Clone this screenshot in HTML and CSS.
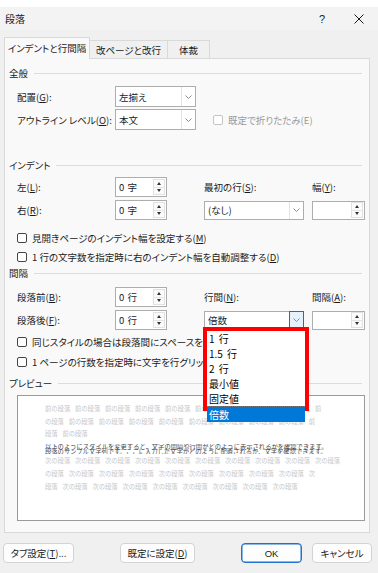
FILE: index.html
```html
<!DOCTYPE html>
<html lang="ja">
<head>
<meta charset="utf-8">
<title>段落</title>
<link rel="stylesheet" href="styles.css">
</head>
<body>
<div class="dialog">
  <div class="topstrip"></div>
  <div class="titlebar">
    <span class="title">段落</span>
    <span class="help">?</span>
    <span class="close"><svg width="10" height="10" viewBox="0 0 10 10"><path d="M0.5 0.5 L9.5 9.5 M9.5 0.5 L0.5 9.5" stroke="#1a1a1a" stroke-width="1"/></svg></span>
  </div>

  <div class="tabs">
    <div class="tab tab-1 active">インデントと行間隔</div>
    <div class="tab tab-2">改ページと改行</div>
    <div class="tab tab-3">体裁</div>
  </div>

  <div class="panel">
    <div class="section-head"><span>全般</span><span class="rule"></span></div>
    <div class="row g1">
      <span class="label">配置(<u>G</u>):</span>
      <div class="combo w81"><span class="val">左揃え</span><span class="arrow"><svg width="7" height="4" viewBox="0 0 7 4"><polyline points="0.5,0.5 3.5,3.5 6.5,0.5" fill="none" stroke="#808080" stroke-width="0.9"/></svg></span></div>
    </div>
    <div class="row g2">
      <span class="label">アウトライン レベル(<u>O</u>):</span>
      <div class="combo w81"><span class="val">本文</span><span class="arrow"><svg width="7" height="4" viewBox="0 0 7 4"><polyline points="0.5,0.5 3.5,3.5 6.5,0.5" fill="none" stroke="#808080" stroke-width="0.9"/></svg></span></div>
      <span class="check disabled inline-check"><span class="box"></span><span>既定で折りたたみ(E)</span></span>
    </div>

    <div class="section-head s-indent"><span>インデント</span><span class="rule"></span></div>
    <div class="row i1">
      <span class="label">左(<u>L</u>):</span>
      <div class="spin"><span class="val">0 字</span><span class="btns"><span class="up"></span><span class="down"></span></span></div>
      <span class="col2-label">最初の行(<u>S</u>):</span>
      <span class="col3-label">幅(<u>Y</u>):</span>
    </div>
    <div class="row i2">
      <span class="label">右(<u>R</u>):</span>
      <div class="spin"><span class="val">0 字</span><span class="btns"><span class="up"></span><span class="down"></span></span></div>
      <div class="combo w100 col2"><span class="val">(なし)</span><span class="arrow"><svg width="7" height="4" viewBox="0 0 7 4"><polyline points="0.5,0.5 3.5,3.5 6.5,0.5" fill="none" stroke="#808080" stroke-width="0.9"/></svg></span></div>
      <div class="spin w53 col3"><span class="val"></span><span class="btns"><span class="up"></span><span class="down"></span></span></div>
    </div>
    <div class="check-row c1"><span class="check"><span class="box"></span><span>見開きページのインデント幅を設定する(<u>M</u>)</span></span></div>
    <div class="check-row c2"><span class="check"><span class="box"></span><span>1 行の文字数を指定時に右のインデント幅を自動調整する(<u>D</u>)</span></span></div>

    <div class="section-head s-space"><span>間隔</span><span class="rule"></span></div>
    <div class="row p1">
      <span class="label">段落前(<u>B</u>):</span>
      <div class="spin"><span class="val">0 行</span><span class="btns"><span class="up"></span><span class="down"></span></span></div>
      <span class="col2-label">行間(<u>N</u>):</span>
      <span class="col3-label">間隔(<u>A</u>):</span>
    </div>
    <div class="row p2">
      <span class="label">段落後(<u>F</u>):</span>
      <div class="spin"><span class="val">0 行</span><span class="btns"><span class="up"></span><span class="down"></span></span></div>
      <div class="combo w100 col2 open"><span class="val">倍数</span><span class="arrow"><svg width="7" height="4" viewBox="0 0 7 4"><polyline points="0.5,0.5 3.5,3.5 6.5,0.5" fill="none" stroke="#808080" stroke-width="0.9"/></svg></span>
        <div class="dropdown">
          <div class="list">
            <div class="item">1 行</div>
            <div class="item">1.5 行</div>
            <div class="item">2 行</div>
            <div class="item">最小値</div>
            <div class="item">固定値</div>
            <div class="item selected">倍数</div>
          </div>
        </div>
      </div>
      <div class="spin w53 col3"><span class="val"></span><span class="btns"><span class="up"></span><span class="down"></span></span></div>
    </div>
    <div class="check-row c3"><span class="check"><span class="box"></span><span>同じスタイルの場合は段落間にスペースを追加しない(<u>C</u>)</span></span></div>
    <div class="check-row c4"><span class="check"><span class="box"></span><span>1 ページの行数を指定時に文字を行グリッド線に合わせる(<u>W</u>)</span></span></div>

    <div class="section-head s-preview"><span>プレビュー</span><span class="rule"></span></div>
    <div class="preview">
      <div class="pv-before">
        <div>前の段落 前の段落 前の段落 前の段落 前の段落 前の段落 前の段落 前の段落 前の段落 前</div>
        <div>の段落 前の段落 前の段落 前の段落 前の段落 前の段落 前の段落 前の段落 前の段落 前</div>
        <div>段落 前の段落</div>
      </div>
      <div class="pv-sample">
        <div>以下のようにスタイルを変更すると、文字の間隔や行間がどのように表示されるかを確認できます。</div>
        <div>段落のサンプル文字列です。ここに入力した文字がどのように配置されるか、文字を確認できます。</div>
      </div>
      <div class="pv-after">
        <div>次の段落 次の段落 次の段落 次の段落 次の段落 次の段落 次の段落 次の段落 次の段落 次の段落</div>
        <div>の段落 次の段落 次の段落 次の段落 次の段落 次の段落 次の段落 次の段落 次の段落 次</div>
        <div>段落 次の段落 次の段落 次の段落 次の段落 次の段落 次の段落 次の段落 次の段落</div>
      </div>
    </div>
  </div>

  <div class="buttons">
    <div class="btn b-tab">タブ設定(<u>T</u>)...</div>
    <div class="btn b-default">既定に設定(<u>D</u>)</div>
    <div class="btn b-ok">OK</div>
    <div class="btn b-cancel">キャンセル</div>
  </div>
</div>
</body>
</html>
```

FILE: styles.css
```css
* { box-sizing: border-box; }
html, body { margin: 0; padding: 0; }
body {
  width: 378px;
  height: 573px;
  overflow: hidden;
  background: #f0f0f0;
  font-family: "Noto Sans CJK JP", "Noto Sans", sans-serif;
  font-size: 9.5px;
  color: #1a1a1a;
  font-feature-settings: "palt";
}
u { text-decoration: underline; text-underline-offset: 1px; }

.topstrip { height: 7px; background: #ffffff; }
.titlebar {
  height: 23px;
  background: #f3f3f3;
  display: flex;
  align-items: center;
  padding-left: 5px;
}
.title { font-size: 10px; }
.help { margin-left: auto; width: 20px; text-align: center; font-size: 11px; font-family: "Liberation Sans", sans-serif; }
.close { margin-left: 17px; margin-right: 9px; width: 20px; display: flex; justify-content: center; }

.tabs {
  height: 28px;
  display: flex;
  align-items: flex-end;
  padding-left: 4px;
  position: relative;
  z-index: 2;
}
.tab {
  height: 18px;
  display: flex;
  align-items: center;
  justify-content: center;
  border-top: 1px solid #d9d9d9;
  border-right: 1px solid #d9d9d9;
  background: #f0f0f0;
}
.tab.active {
  height: 22px;
  margin-bottom: -1px;
  background: #f9f9f9;
  border-left: 1px solid #d9d9d9;
  padding-bottom: 1px;
}
.tab-1 { width: 86px; }
.tab-2 { width: 78px; }
.tab-3 { width: 42px; }

.panel {
  margin: 0 8px 0 4px;
  height: 475px;
  background: #f9f9f9;
  border: 1px solid #d9d9d9;
  position: relative;
  z-index: 1;
}

.section-head {
  height: 14px;
  margin-top: 7px;
  display: flex;
  align-items: center;
  padding: 0 7px 0 4px;
  color: #1a1a1a;
}
.section-head .rule { flex: 1; height: 1px; background: #dcdcdc; margin-left: 6px; }
.s-indent { margin-top: 28px; }
.s-space { margin-top: 0; }
.s-preview { margin-top: 4px; }

.row {
  display: flex;
  align-items: center;
  padding-left: 12px;
}
.row .label { width: 98px; flex: none; }
.g1 { margin-top: 6px; height: 21px; }
.g2 { margin-top: 2px; height: 21px; }
.i1 { margin-top: 5px; height: 20px; }
.i2 { margin-top: 3px; height: 20px; }
.p1 { margin-top: 7px; height: 20px; }
.p2 { margin-top: 3px; height: 20px; }

.combo {
  height: 100%;
  background: #ffffff;
  border: 1px solid #adadad;
  display: flex;
  align-items: center;
  position: relative;
  flex: none;
}
.combo .val { flex: 1; padding-left: 3px; white-space: nowrap; }
.combo .arrow {
  width: 14px;
  height: 100%;
  border-left: 1px solid #e3e3e3;
  display: flex;
  align-items: center;
  justify-content: center;
}
.combo.open .arrow {
  border: 1px solid #0078d7;
  background: #e5f1fb;
  margin-right: -1px;
  height: calc(100% + 2px);
  width: 15px;
}
.w81 { width: 81px; }
.w100 { width: 100px; height: 19px; }
.col2 { margin-left: 37px; }
.col3 { margin-left: 8px; }

.spin {
  width: 52px;
  height: 100%;
  background: #ffffff;
  border: 1px solid #adadad;
  display: flex;
  align-items: center;
  flex: none;
}
.spin .val { flex: 1; padding-left: 3px; white-space: pre; word-spacing: 1px; }
.spin .btns {
  width: 12px;
  height: 16px;
  margin-right: 1px;
  border: 1px solid #e1e1e1;
  background: #fbfbfb;
  display: flex;
  flex-direction: column;
}
.spin .btns span { flex: 1; display: flex; align-items: center; justify-content: center; }
.spin .btns .up { border-bottom: 1px solid #e6e6e6; }
.spin .up::before {
  content: "";
  border-left: 2.5px solid transparent;
  border-right: 2.5px solid transparent;
  border-bottom: 3px solid #333;
}
.spin .down::before {
  content: "";
  border-left: 2.5px solid transparent;
  border-right: 2.5px solid transparent;
  border-top: 3px solid #333;
}
.w53 { width: 53px; height: 19px; }

.col2-label { margin-left: 37px; width: 108px; flex: none; }
.col3-label { flex: none; }

.check { display: inline-flex; align-items: center; white-space: nowrap; }
.check .box {
  width: 10px;
  height: 10px;
  border: 1px solid #444;
  border-radius: 2px;
  background: #fff;
  margin-right: 5px;
  flex: none;
}
.check.disabled { color: #9a9a9a; }
.check.disabled .box { border-color: #c4c4c4; }
.inline-check { margin-left: 17px; }

.check-row { display: flex; align-items: center; padding-left: 12px; }
.c1 { margin-top: 8px; height: 19px; }
.c2 { height: 19px; }
.c3 { margin-top: 2px; height: 20px; }
.c4 { height: 20px; }

.dropdown {
  position: absolute;
  left: -2px;
  top: 15px;
  width: 106px;
  height: 84px;
  border: 4px solid #ff0000;
  background: #ffffff;
  z-index: 5;
}
.list { height: 100%; display: flex; flex-direction: column; }
.item {
  flex: 1;
  display: flex;
  align-items: center;
  padding-left: 2px;
  font-size: 10px;
  color: #000;
  font-feature-settings: normal;
  white-space: pre;
  word-spacing: 2px;
}
.item.selected {
  background: #0078d7;
  color: #ffffff;
  border-top: 1px dotted #7a7a7a;
}

.preview {
  margin: 5px 0 0 12px;
  width: 348px;
  height: 126px;
  background: #ffffff;
  border: 1px solid #9a9a9a;
  padding: 7px 0 0 27px;
  overflow: hidden;
  font-size: 6.3px;
  font-feature-settings: normal;
  word-spacing: 3.4px;
  white-space: nowrap;
}
.pv-before, .pv-after { color: #c6c6c6; }
.pv-before div { height: 12.5px; line-height: 12.5px; }
.pv-sample { margin-top: 3px; color: #4a4a4a; width: 282px; overflow: hidden; word-spacing: 0; }
.pv-sample div { height: 5px; line-height: 5px; }
.pv-after div { height: 13px; line-height: 13px; }

.buttons {
  margin-top: 10px;
  height: 20px;
  display: flex;
  padding-left: 3px;
}
.btn {
  height: 20px;
  background: #fdfdfd;
  border: 1px solid #d3d3d3;
  border-radius: 4px;
  display: flex;
  align-items: center;
  justify-content: center;
  flex: none;
}
.b-tab { width: 71px; }
.b-default { width: 75px; margin-left: 46px; }
.b-ok { width: 61px; margin-left: 46px; border: 1px solid #1e74cc; box-shadow: inset 0 0 0 0.5px #1e74cc; font-family: "Liberation Sans", sans-serif; }
.b-cancel { width: 60px; margin-left: 10px; }
```
